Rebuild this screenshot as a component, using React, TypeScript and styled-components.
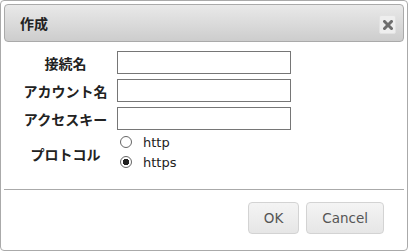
import React from 'react';
import styled, { createGlobalStyle } from 'styled-components';

const GlobalStyle = createGlobalStyle`
  html, body {
    margin: 0;
    padding: 0;
    background: #ffffff;
  }
  body {
    font-family: 'DejaVu Sans', Verdana, sans-serif;
  }
`;

const jpFont = `'Noto Sans CJK JP', 'Noto Sans', sans-serif`;

const Dialog = styled.div`
  box-sizing: border-box;
  width: 408px;
  height: 251px;
  border: 1px solid #aaaaaa;
  border-radius: 4px;
  padding: 3px;
  background: #ffffff;
  display: flex;
  flex-direction: column;
`;

const TitleBar = styled.div`
  box-sizing: border-box;
  height: 38px;
  border: 1px solid #aaaaaa;
  border-radius: 4px;
  background: linear-gradient(#e9e9e9, #cdcdcd);
  display: flex;
  align-items: center;
  justify-content: space-between;
  padding: 0 7px 0 15px;
`;

const Title = styled.span`
  font-family: ${jpFont};
  font-weight: bold;
  font-size: 14px;
  color: #222222;
`;

const CloseButton = styled.button`
  box-sizing: border-box;
  width: 17px;
  height: 19px;
  margin-top: 3px;
  padding: 0;
  border: 1px solid #e2e2e2;
  border-radius: 2px;
  background: #eeeeee;
  display: flex;
  align-items: center;
  justify-content: center;
`;

const Content = styled.div`
  flex: 1;
  padding: 9px 15px 0 15px;
`;

const Form = styled.div`
  display: grid;
  grid-template-columns: 93px 174px;
  column-gap: 5px;
  row-gap: 5px;
  align-items: center;
`;

const Label = styled.label`
  font-family: ${jpFont};
  font-weight: bold;
  font-size: 14px;
  color: #222222;
  text-align: center;
  line-height: 18px;
`;

const TextInput = styled.input`
  box-sizing: border-box;
  width: 174px;
  height: 23px;
  border: 1px solid #767676;
  border-radius: 0;
  padding: 1px 3px;
  margin: 0;
  font-size: 13px;
`;

const RadioGroup = styled.div`
  display: flex;
  flex-direction: column;
  margin-top: -3px;
  padding-left: 3px;
`;

const RadioRow = styled.label`
  display: flex;
  align-items: center;
  gap: 11px;
  height: 20px;
  font-size: 13px;
  color: #222222;
`;

const Radio = styled.input`
  appearance: none;
  box-sizing: border-box;
  width: 12px;
  height: 12px;
  margin: 0;
  border: 1px solid #666666;
  border-radius: 50%;
  background: #ffffff;

  &:checked {
    background: radial-gradient(circle, #222222 0 3px, #ffffff 3.5px);
  }
`;

const ButtonPane = styled.div`
  border-top: 1px solid #aaaaaa;
  display: flex;
  justify-content: flex-end;
  gap: 7px;
  padding: 12px 20px 13px 0;
`;

const Button = styled.button`
  box-sizing: border-box;
  height: 32px;
  padding: 0 15px;
  border: 1px solid #d3d3d3;
  border-radius: 4px;
  background: linear-gradient(#f4f4f4, #e6e6e6);
  color: #555555;
  font-family: 'DejaVu Sans', Verdana, sans-serif;
  font-size: 13.5px;
`;

const CloseIcon = () => (
  <svg width="10" height="10" viewBox="0 0 10 10">
    <path d="M1.5 1.5 L8.5 8.5 M8.5 1.5 L1.5 8.5" stroke="#6e6e6e" strokeWidth="3" strokeLinecap="square" />
  </svg>
);

export default function App() {
  return (
    <>
      <GlobalStyle />
      <Dialog>
        <TitleBar>
          <Title>作成</Title>
          <CloseButton aria-label="close">
            <CloseIcon />
          </CloseButton>
        </TitleBar>
        <Content>
          <Form>
            <Label>接続名</Label>
            <TextInput type="text" />
            <Label>アカウント名</Label>
            <TextInput type="text" />
            <Label>アクセスキー</Label>
            <TextInput type="text" />
            <Label>プロトコル</Label>
            <RadioGroup>
              <RadioRow>
                <Radio type="radio" name="protocol" value="http" />
                http
              </RadioRow>
              <RadioRow>
                <Radio type="radio" name="protocol" value="https" defaultChecked />
                https
              </RadioRow>
            </RadioGroup>
          </Form>
        </Content>
        <ButtonPane>
          <Button>OK</Button>
          <Button>Cancel</Button>
        </ButtonPane>
      </Dialog>
    </>
  );
}
